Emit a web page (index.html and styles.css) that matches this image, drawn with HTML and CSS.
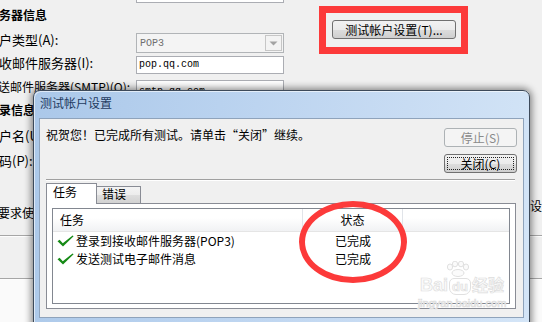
FILE: index.html
```html
<!DOCTYPE html>
<html lang="zh-CN">
<head>
<meta charset="utf-8">
<title>测试帐户设置</title>
<link rel="stylesheet" href="styles.css">
</head>
<body>
<div class="page">
  <div class="form">
    <div class="field topfield"></div>
    <div class="head">服务器信息</div>
    <div class="row r-type">
      <span class="lbl">账户类型(A):</span>
      <div class="combo">
        <span class="combo-val">POP3</span>
        <span class="combo-btn"><svg width="9" height="5" viewBox="0 0 9 5"><path d="M0.5 0.5 H8.5 L4.5 4.5 Z" fill="#a3a3a3"/></svg></span>
      </div>
    </div>
    <div class="row r-in">
      <span class="lbl">接收邮件服务器(I):</span>
      <div class="field val">pop.qq.com</div>
    </div>
    <div class="row r-out">
      <span class="lbl lbl-sm">发送邮件服务器(SMTP)(O):</span>
      <div class="field val val-out">smtp.qq.com</div>
    </div>
    <div class="head head2">登录信息</div>
    <div class="row r-user">
      <span class="lbl">用户名(U):</span>
      <div class="field"></div>
    </div>
    <div class="row r-pass">
      <span class="lbl">密码(P):</span>
      <div class="field"></div>
    </div>
    <div class="spa">要求使用安全密码验证(SPA)进行登录(Q)</div>
  </div>
  <div class="side">
    <div class="test-wrap">
      <div class="btn btn-test">测试帐户设置(T)...</div>
      <div class="mark-rect"></div>
    </div>
    <div class="more">其他设置(M)...</div>
  </div>
</div>
<div class="footer">
  <div class="rule rule1"></div>
  <div class="rule rule2"></div>
  <div class="fill"></div>
</div>

<div class="dialog">
  <div class="d-title">测试帐户设置</div>
  <div class="client">
    <div class="top">
      <div class="msg">祝贺您！已完成所有测试。请单击“关闭”继续。</div>
      <div class="dbtns">
        <div class="btn off">停止(S)</div>
        <div class="btn focus">关闭(C)</div>
      </div>
    </div>
    <div class="sep"></div>
    <div class="tabs">
      <div class="tab on">任务</div>
      <div class="tab off">错误</div>
    </div>
    <div class="pane">
      <div class="lv">
        <div class="lv-head">
          <div class="h1">任务</div>
          <div class="h2">状态</div>
          <div class="h3"></div>
        </div>
        <div class="lv-row">
          <div class="c1"><svg class="ok" width="17" height="12" viewBox="0 0 17 12"><path d="M0.5 6.2 L2.6 4.8 L5.8 8.2 L15.6 0.4 L16.6 1.3 L6 11.6 Z" fill="#168a16"/></svg><span>登录到接收邮件服务器(POP3)</span></div>
          <div class="c2">已完成</div>
          <div></div>
        </div>
        <div class="lv-row">
          <div class="c1"><svg class="ok" width="17" height="12" viewBox="0 0 17 12"><path d="M0.5 6.2 L2.6 4.8 L5.8 8.2 L15.6 0.4 L16.6 1.3 L6 11.6 Z" fill="#168a16"/></svg><span>发送测试电子邮件消息</span></div>
          <div class="c2">已完成</div>
          <div></div>
        </div>
      </div>
    </div>
  </div>
</div>

<div class="mark-ellipse"></div>

<div class="wm">
  <svg class="paw" width="28" height="16" viewBox="0 0 28 16">
    <g fill="#fbfbfb" stroke="#e0e0e0" stroke-width="1">
      <ellipse cx="6" cy="6" rx="2.6" ry="3"/>
      <ellipse cx="11" cy="3" rx="2.6" ry="2.8"/>
      <ellipse cx="17" cy="3" rx="2.6" ry="2.8"/>
      <ellipse cx="22" cy="6" rx="2.6" ry="3"/>
      <ellipse cx="14" cy="12" rx="6" ry="3.5"/>
    </g>
  </svg>
  <div class="wm-logo"><span class="bai">Bai</span><span class="du">du</span><span class="jy">经验</span></div>
  <div class="wm-url">jingyan.baidu.com</div>
</div>
</body>
</html>
```

FILE: styles.css
```css
* { box-sizing: border-box; }
html, body { margin: 0; padding: 0; }
body {
  width: 542px;
  height: 322px;
  overflow: hidden;
  position: relative;
  background: #f0f0f0;
  font-family: "Noto Sans CJK SC", "Noto Sans", sans-serif;
  font-size: 12px;
  color: #000;
}

/* ---------- background form ---------- */
.page { display: flex; align-items: flex-start; }
.form {
  flex: none;
  width: 297px;
  margin-left: -13px;
  display: flex;
  flex-direction: column;
}
.field {
  width: 148px;
  border: 1px solid #abadb3;
  background: #fff;
}
.topfield { height: 20px; margin: -17px 0 0 149px; }
.head { font-weight: bold; line-height: 14px; margin-top: 5px; white-space: nowrap; }
.head2 { margin-top: 3px; }
.row { display: grid; grid-template-columns: 149px 148px; align-items: start; }
.lbl { font-size: 13px; line-height: 14px; margin-left: -1px; white-space: nowrap; }
.lbl-sm { font-size: 12px; }
.r-type { margin-top: 11px; }
.r-in { margin-top: 3px; }
.r-in .field { height: 18px; }
.r-out { margin-top: 6px; }
.r-out .field, .r-user .field, .r-pass .field { height: 20px; }
.r-user { margin-top: 12px; }
.r-pass { margin-top: 5px; }
.spa { margin: 32px 0 0 11px; line-height: 14px; white-space: nowrap; }
.val {
  font-family: "Liberation Mono", monospace;
  font-size: 10px;
  line-height: 16px;
  padding-left: 2px;
}
.val-out { padding-top: 3px; }
.combo {
  width: 148px;
  height: 20px;
  border: 1px solid #b1b4b7;
  background: #f4f4f4;
  display: flex;
  align-items: center;
  justify-content: space-between;
  padding: 0 1px 0 3px;
}
.combo-val {
  font-family: "Liberation Mono", monospace;
  font-size: 10px;
  color: #6f6f6f;
}
.combo-btn {
  width: 17px;
  height: 16px;
  border: 1px solid #c6c6c6;
  background: #f3f3f3;
  display: flex;
  align-items: center;
  justify-content: center;
}

.side {
  flex: none;
  width: 300px;
  display: flex;
  flex-direction: column;
  align-items: flex-start;
}
.test-wrap { position: relative; margin: 20px 0 0 48px; }
.btn-test { width: 124px; height: 19px; }
.mark-rect {
  position: absolute;
  left: -13px;
  top: -14px;
  width: 149px;
  height: 48px;
  border: 7px solid #fc3a3a;
}
.more { margin: 160px 0 0 222px; line-height: 14px; white-space: nowrap; }

.footer { display: flex; flex-direction: column; }
.rule { height: 2px; border-top: 1px solid #a6a6a6; border-bottom: 1px solid #fdfdfd; }
.rule1 { margin-top: 15px; }
.rule2 { margin-top: 41px; }
.fill { height: 60px; background: #fafafa; }

/* ---------- buttons ---------- */
.btn {
  position: relative;
  border: 1px solid #707070;
  border-radius: 3px;
  background: linear-gradient(#f2f2f2, #ebebeb 50%, #dddddd 51%, #cfcfcf);
  text-align: center;
  line-height: 17px;
  white-space: nowrap;
}
.btn.off { border-color: #adb2b5; background: #f4f4f4; color: #8a8a8a; }
.btn.focus::after {
  content: "";
  position: absolute;
  inset: 2px;
  border: 1px dotted #222;
}

/* ---------- dialog ---------- */
.dialog {
  position: absolute;
  left: 33px;
  top: 90px;
  width: 497px;
  height: 245px;
  border: 1px solid #3d4a5a;
  border-radius: 7px 7px 0 0;
  padding: 0 5px;
  background: linear-gradient(100deg, #abc8e9 0%, #b9d2ef 35%, #c8dcf3 70%, #d4e5f7 100%);
  box-shadow: 0 0 7px 2px rgba(0, 0, 0, 0.45), inset 1px 1px 0 rgba(255, 255, 255, 0.6);
}
.d-title {
  height: 27px;
  padding: 4px 0 0 1px;
  line-height: 16px;
  color: #1e3a5f;
}
.client {
  height: 200px;
  border: 1px solid #8fa3bb;
  background: #f0f0f0;
}
.top {
  display: flex;
  justify-content: space-between;
  align-items: flex-start;
  padding: 0 6px;
}
.msg { margin-top: 8px; line-height: 16px; white-space: nowrap; }
.dbtns { margin-top: 9px; display: flex; flex-direction: column; gap: 7px; }
.dbtns .btn { width: 73px; height: 19px; }
.sep {
  margin: 6px 8px 0 6px;
  height: 2px;
  border-top: 1px solid #a0a0a0;
  border-bottom: 1px solid #fff;
}
.tabs { display: flex; align-items: flex-end; height: 20px; margin: 2px 0 0 6px; }
.tab { border: 1px solid #898c95; border-bottom: none; line-height: 14px; white-space: nowrap; }
.tab.on {
  width: 51px;
  height: 21px;
  margin-bottom: -1px;
  padding: 1px 0 0 6px;
  background: #fff;
  position: relative;
  z-index: 1;
}
.tab.off {
  width: 44px;
  height: 17px;
  border-left: none;
  padding: 0 0 0 5px;
  background: linear-gradient(#f4f4f4, #ececec 50%, #dedede 51%, #d2d2d2);
}
.pane {
  height: 106px;
  margin: 0 7px 0 6px;
  border: 1px solid #898c95;
  background: #fff;
  padding: 4px 5px;
}
.lv {
  height: 96px;
  border: 1px solid #828790;
  background: #fff;
}
.lv-head {
  display: grid;
  grid-template-columns: 250px 100px 1fr;
  height: 23px;
  border-bottom: 1px solid #e5e5e5;
  background: linear-gradient(#ffffff, #ffffff 40%, #f1f2f4);
}
.lv-head > div { line-height: 22px; border-right: 1px solid #e1e4e9; }
.lv-head > .h3 { border-right: none; }
.h1 { padding-left: 7px; }
.h2 { text-align: center; }
.lv-row {
  display: grid;
  grid-template-columns: 250px 100px 1fr;
  height: 18px;
  line-height: 18px;
}
.c1 { display: flex; align-items: center; gap: 2px; padding-left: 4px; white-space: nowrap; }
.ok { flex: none; }
.c2 { text-align: center; }

/* ---------- annotations ---------- */
.mark-ellipse {
  position: absolute;
  left: 299px;
  top: 201px;
  width: 108px;
  height: 82px;
  border: 6.5px solid #fc3a3a;
  border-radius: 50%;
}
.wm {
  position: absolute;
  left: 412px;
  top: 261px;
  width: 100px;
  display: flex;
  flex-direction: column;
  align-items: center;
  color: #fafafa;
  -webkit-text-stroke: 0.7px #dedede;
}
.paw { margin-left: -8px; }
.wm-logo {
  display: flex;
  align-items: baseline;
  font-family: "Liberation Sans", sans-serif;
  font-weight: bold;
  line-height: 15px;
}
.bai { font-size: 18px; }
.du {
  font-size: 13px;
  border: 1px solid #e0e0e0;
  border-radius: 5px 5px 7px 7px;
  padding: 0 2px;
  margin: 0 1px;
}
.jy { font-family: "Noto Sans CJK SC", sans-serif; font-size: 16px; }
.wm-url {
  font-family: "Liberation Sans", sans-serif;
  font-size: 11px;
  line-height: 13px;
  margin-top: 2px;
  color: #f2f2f2;
}
```
